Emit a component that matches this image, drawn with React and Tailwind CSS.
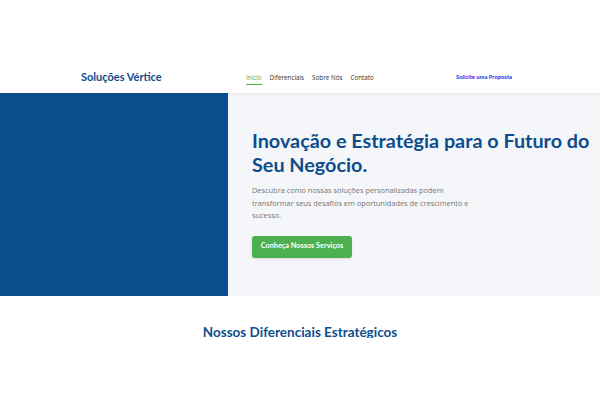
export default function App() {
  return (
    <div className="w-[600px] h-[400px] bg-white overflow-hidden font-['Open_Sans',sans-serif]">
      <div className="h-[62px]" />

      {/* Header */}
      <header className="relative z-10 h-[31px] bg-white shadow-[0_1px_3px_rgba(0,0,0,0.08)] flex items-center pl-[81px] pr-[88px]">
        <div className="w-[165px] font-['Lato',sans-serif] font-bold text-[11px] text-[#0f4c8a]">Soluções Vértice</div>
        <nav className="flex items-center gap-[8px] text-[6.3px] font-medium text-[#333]">
          <span className="relative text-[#4caf50]">
            Início
            <span className="absolute left-0 right-0 -bottom-[3px] h-[1px] bg-[#4caf50]" />
          </span>
          <span>Diferenciais</span>
          <span>Sobre Nós</span>
          <span>Contato</span>
        </nav>
        <div className="ml-auto font-['Lato',sans-serif] font-bold text-[5.8px] text-[#2a2ae0]">Solicite uma Proposta</div>
      </header>

      {/* Hero */}
      <section className="flex h-[203px]">
        <div className="w-[228px] bg-[#0b4f8f]" />
        <div className="flex-1 bg-[#f4f6f9] pl-[24px] pt-[35px]">
          <h1 className="font-['Lato',sans-serif] font-bold text-[19.8px] leading-[24px] text-[#0e4d8c]">
            Inovação e Estratégia para o Futuro do Seu Negócio.
          </h1>
          <p className="mt-[8px] w-[225px] text-[7.4px] leading-[12.5px] text-[#777]">
            Descubra como nossas soluções personalizadas podem transformar seus desafios em oportunidades de crescimento e sucesso.
          </p>
          <button className="mt-[14px] w-[100px] h-[22px] rounded-[3px] bg-[#4caf50] text-white font-['Lato',sans-serif] font-bold text-[7.3px] shadow-sm">
            Conheça Nossos Serviços
          </button>
        </div>
      </section>

      {/* Diferenciais */}
      <section className="h-[42px] overflow-hidden flex justify-center pt-[27px]">
        <h2 className="font-['Lato',sans-serif] font-bold text-[13.5px] leading-[18px] text-[#0e4d8c]">
          Nossos Diferenciais Estratégicos
        </h2>
      </section>
    </div>
  );
}
